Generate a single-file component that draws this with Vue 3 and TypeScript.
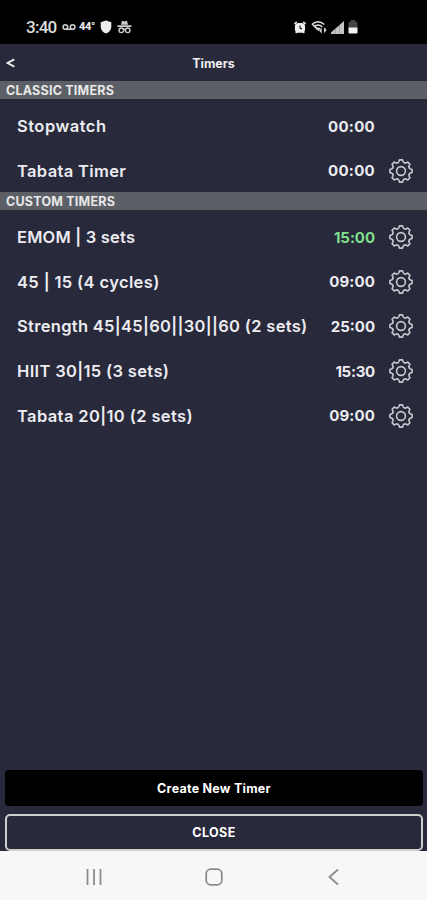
<script setup lang="ts">
interface Timer {
  name: string
  time: string
  tracking: number
  timeTracking: number
  editable: boolean
  active?: boolean
}

interface Section {
  title: string
  timers: Timer[]
}

const sections: Section[] = [
  {
    title: 'CLASSIC TIMERS',
    timers: [
      { name: 'Stopwatch', time: '00:00', tracking: 0.48, timeTracking: 0.3, editable: false },
      { name: 'Tabata Timer', time: '00:00', tracking: 0.35, timeTracking: 0.3, editable: true },
    ],
  },
  {
    title: 'CUSTOM TIMERS',
    timers: [
      { name: 'EMOM | 3 sets', time: '15:00', tracking: 0.2, timeTracking: -0.05, editable: true, active: true },
      { name: '45 | 15 (4 cycles)', time: '09:00', tracking: 0.37, timeTracking: 0.15, editable: true },
      { name: 'Strength 45|45|60||30||60 (2 sets)', time: '25:00', tracking: 0.31, timeTracking: 0, editable: true },
      { name: 'HIIT 30|15 (3 sets)', time: '15:30', tracking: 0.34, timeTracking: -0.25, editable: true },
      { name: 'Tabata 20|10 (2 sets)', time: '09:00', tracking: 0.38, timeTracking: 0.15, editable: true },
    ],
  },
]

// Eight-toothed outline, alternating between tooth tips and scooped valleys.
function gearPath(): string {
  const teeth = 8
  const point = (deg: number, r: number): string => {
    const a = ((deg - 90) * Math.PI) / 180
    return `${(12 + r * Math.cos(a)).toFixed(2)} ${(12 + r * Math.sin(a)).toFixed(2)}`
  }
  let d = `M${point(-8, 11.2)}`
  for (let i = 0; i < teeth; i++) {
    const c = (i * 360) / teeth
    d += `L${point(c + 8, 11.2)}L${point(c + 12, 9.7)}Q${point(c + 22.5, 7.9)} ${point(c + 33, 9.7)}L${point(c + 37, 11.2)}`
  }
  return d + 'Z'
}

const gear = gearPath()
</script>

<template>
  <div class="screen">
    <div class="status">
      <div class="status-left">
        <span class="clock">3:40</span>
        <svg class="voicemail" width="14" height="8" viewBox="0 0 14 8">
          <circle cx="3.4" cy="4" r="2.3" />
          <circle cx="10.6" cy="4" r="2.3" />
          <path d="M3.4 6.3H10.6" />
        </svg>
        <span class="temp">44°</span>
        <svg class="shield" width="12" height="14" viewBox="0 0 12 14">
          <path d="M6 .5 11.3 2.2V7C11.3 10 9 12.3 6 13.5 3 12.3.7 10 .7 7V2.2Z" />
        </svg>
        <svg class="spy" width="15" height="14" viewBox="0 0 15 14">
          <path class="solid" d="M4 4.8 5 .8 7.500 1.600 10 .8 11 4.800ZM.5 5.200H14.500V7H.5Z" />
          <circle cx="4.3" cy="10.3" r="2.3" />
          <circle cx="10.7" cy="10.3" r="2.3" />
          <path d="M6.4 9.6Q7.500 9 8.600 9.600" />
        </svg>
      </div>
      <div class="status-right">
        <svg width="12" height="13" viewBox="0 0 13 14">
          <path d="M.5 3.300 3 1M12.500 3.300 10 1M2 13 3.200 11.500M11 13 9.800 11.500" stroke="#ddd" stroke-width="1.900" />
          <rect x="1" y="2" width="11" height="10.800" rx="4" fill="#eee" />
          <path d="M6.500 4.800V7.600L8.600 8.600" fill="none" stroke="#111" stroke-width="1.200" />
        </svg>
        <svg class="wifi" width="16" height="15" viewBox="0 0 17 15">
          <g fill="none" stroke="#ddd" stroke-width="1.6">
            <path d="M.8 4.300Q7.500-1.500 14.200 4.300M3 6.800Q7.500 3 12 6.800M5.300 9.200Q7.500 7.300 9.700 9.200" />
            <path d="M1.500 4 8.500 10.500" />
          </g>
          <path d="M11.400 7.500V14L8.500 11ZM13.800 13.500V7L16.700 10.200Z" fill="#ccc" />
        </svg>
        <svg width="13" height="13" viewBox="0 0 13 13">
          <path d="M0 13V11.500L13 0V13Z" fill="#c4c4c4" />
          <path d="M4.500 7V13M8.500 4V13" stroke="#888" stroke-width=".6" />
        </svg>
        <svg width="10" height="14" viewBox="0 0 10 14">
          <path d="M3 0H7V1.500H8Q9.500 1.500 9.500 3V8H.5V3Q.5 1.500 2 1.500H3Z" fill="#444" />
          <path d="M.5 7.500H9.500V12.500Q9.500 13.500 8.500 13.500H1.500Q.5 13.500.5 12.500Z" fill="#f2f2f2" />
        </svg>
      </div>
    </div>

    <header class="header">
      <button class="back" aria-label="Back">
        <svg width="9" height="10" viewBox="0 0 9 10"><path d="M8.300 1.300 1.500 5 8.300 8.700" /></svg>
      </button>
      <h1>Timers</h1>
    </header>

    <main>
      <section v-for="section in sections" :key="section.title">
        <h2>{{ section.title }}</h2>
        <ul>
          <li v-for="timer in section.timers" :key="timer.name">
            <span class="name" :style="{ letterSpacing: timer.tracking + 'px' }">{{ timer.name }}</span>
            <span
              class="time"
              :class="{ active: timer.active }"
              :style="{ letterSpacing: timer.timeTracking + 'px' }"
            >{{ timer.time }}</span>
            <span class="settings">
              <svg v-if="timer.editable" width="24" height="24" viewBox="0 0 24 24">
                <path :d="gear" />
                <circle cx="12" cy="12" r="4.4" />
              </svg>
            </span>
          </li>
        </ul>
      </section>
    </main>

    <footer>
      <button class="create">Create New Timer</button>
      <button class="close">CLOSE</button>
    </footer>

    <nav>
      <svg width="18" height="18" viewBox="0 0 18 18"><path d="M2.500 1V17M9 1V17M15.500 1V17" /></svg>
      <svg width="18" height="18" viewBox="0 0 18 18"><rect x="1.200" y="1.200" width="15.600" height="15.600" rx="4.500" /></svg>
      <svg width="18" height="18" viewBox="0 0 18 18"><path d="M13 1.500 4.500 9 13 16.500" /></svg>
    </nav>
  </div>
</template>

<style>
body {
  margin: 0;
  background: #28293b;
}
</style>

<style scoped>
.screen {
  display: flex;
  flex-direction: column;
  width: 100%;
  height: 900px;
  overflow: hidden;
  background: #28293b;
  color: #ececf0;
  font-family: Inter, 'Liberation Sans', sans-serif;
}

svg {
  display: block;
}

button {
  font-family: inherit;
  color: #fff;
}

.status {
  display: flex;
  justify-content: space-between;
  height: 44px;
  padding: 11px 69px 0 26px;
  box-sizing: border-box;
  background: #000;
}

.status-left,
.status-right {
  display: flex;
  align-items: center;
  height: 32px;
}

.status-right {
  gap: 4px;
}

.wifi {
  margin-left: 1px;
}

.clock {
  width: 36px;
  font: 500 17px/32px Roboto, sans-serif;
  letter-spacing: -0.75px;
  color: #ddd;
}

.voicemail {
  fill: none;
  stroke: #ccc;
  stroke-width: 1.6;
}

.temp {
  width: 20px;
  margin-left: 3px;
  font: 800 11px/32px Roboto, sans-serif;
  letter-spacing: -0.3px;
}

.shield {
  margin-left: 1px;
  fill: #eee;
}

.spy {
  margin-left: 5px;
  fill: none;
  stroke: #ccc;
  stroke-width: 1.4;
}

.spy .solid {
  fill: #ccc;
  stroke: none;
}

.header {
  display: grid;
  grid-template-columns: 40px 1fr 40px;
  align-items: center;
  height: 37px;
  padding-top: 1px;
  box-sizing: border-box;
}

.back {
  width: 40px;
  padding: 0 0 0 6px;
  border: 0;
  background: none;
}

.back path {
  fill: none;
  stroke: #eee;
  stroke-width: 1.9;
}

h1 {
  margin: 0;
  font-size: 12.5px;
  font-weight: 700;
  text-align: center;
  color: #eee;
}

main {
  flex: 1;
}

h2 {
  height: 18px;
  margin: 0;
  padding-left: 6px;
  background: #5c5f66;
  font-size: 12.5px;
  font-weight: 700;
  line-height: 19px;
  letter-spacing: 0.22px;
  color: #e8e8e8;
}

ul {
  height: 93px;
  margin: 0;
  padding: 5px 14.5px 0 17px;
  box-sizing: border-box;
  list-style: none;
}

li {
  display: flex;
  align-items: center;
  height: 44.6px;
  white-space: nowrap;
}

.name {
  flex: 1;
  font-size: 16.5px;
  font-weight: 600;
}

.time {
  font-size: 15px;
  font-weight: 700;
}

.time.active {
  color: #80df8c;
}

.settings {
  width: 24px;
  margin-left: 13.5px;
}

.settings svg {
  fill: none;
  stroke: #c8c9d0;
  stroke-width: 1.6;
  stroke-linejoin: round;
}

footer {
  display: flex;
  flex-direction: column;
  gap: 8px;
  padding: 0 4px 0 5px;
}

footer button {
  height: 36px;
  padding: 0;
  border: 0;
  border-radius: 4px;
  font-size: 12.5px;
  font-weight: 700;
}

.create {
  background: #000;
  letter-spacing: 0.25px;
}

footer .close {
  height: 37px;
  border: 2px solid #cfd0cc;
  border-radius: 5px;
  background: #28293b;
  letter-spacing: 0.4px;
}

nav {
  display: flex;
  justify-content: center;
  align-items: center;
  gap: 102px;
  height: 49px;
  padding-top: 2px;
  box-sizing: border-box;
  background: #f7f7f7;
}

nav svg {
  fill: none;
  stroke: #8c8c8c;
  stroke-width: 1.8;
}
</style>
